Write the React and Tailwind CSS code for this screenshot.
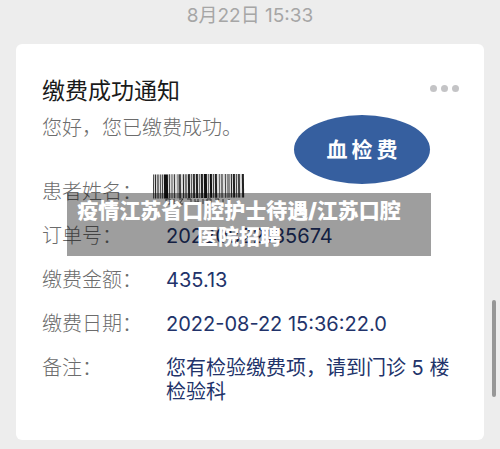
const rows = [
  { label: "患者姓名：", value: "" },
  { label: "订单号：", value: "20220822135674" },
  { label: "缴费金额：", value: "435.13" },
  { label: "缴费日期：", value: "2022-08-22 15:36:22.0" },
  { label: "备注：", value: "您有检验缴费项，请到门诊 5 楼检验科" },
];

// [x, width, colour] of every bar in the barcode
const bars = [
  [0, 1, "#444"], [2, 1, "#222"], [4, 2, "#777"], [7, 1, "#555"],
  [9, 1, "#444"], [11, 4, "#111"], [16, 1, "#444"], [18, 2, "#999"],
  [21, 1, "#333"], [24, 2, "#999"], [26, 2, "#444"], [30, 1, "#222"],
  [32, 2, "#777"], [35, 2, "#222"], [38, 1, "#555"], [40, 2, "#333"],
  [43, 2, "#222"], [46, 1, "#666"], [48, 2, "#222"], [51, 3, "#111"],
  [55, 1, "#666"], [57, 2, "#111"], [60, 1, "#444"], [62, 2, "#222"],
  [66, 1, "#666"], [68, 2, "#777"], [72, 1, "#444"], [74, 3, "#888"],
  [78, 1, "#222"], [80, 2, "#222"], [83, 1, "#444"], [85, 2, "#444"],
  [89, 2, "#222"],
];

function Barcode() {
  return (
    <svg
      viewBox="0 0 92 32"
      className="absolute left-[137px] top-[130px] w-[92px] h-8"
      aria-hidden="true"
    >
      <g transform="rotate(-0.7 46 12)">
        <rect width="91" height="24" fill="#ddd" />
        {bars.map(([x, w, fill]) => (
          <rect key={x} x={x} y="0" width={w} height="24" fill={fill} />
        ))}
      </g>
      <g stroke="#555" fill="none">
        <path d="M13 25h4v5h-4zM21 25v5M26 25h4l-4 5h4M34 25h4v5h-4M42 25v3h4M45 25v5M50 30v-5M54 25h4v5h-4zM62 25h4l-2 5M70 25v5M76 25v5" />
      </g>
    </svg>
  );
}

function App() {
  return (
    <div className="relative min-h-screen bg-[#ededed] px-4 pb-2 font-['Inter','Noto_Sans_CJK_SC',sans-serif]">
      <p className="h-11 pt-1 text-center text-[19px] leading-6 text-[#a6a6a6]">
        8月22日 15:33
      </p>

      <div className="relative rounded-md bg-white px-[26px] pt-8 pb-9">
        <div className="flex items-center justify-between">
          <h1 className="text-[23px] leading-[30px] text-[#1a1a1a]">缴费成功通知</h1>
          <button
            type="button"
            aria-label="更多"
            className="-mr-px flex items-center gap-1 pb-1.5"
          >
            <span className="size-[7px] rounded-full bg-[#c4c4c6]" />
            <span className="size-[7px] rounded-full bg-[#c4c4c6]" />
            <span className="size-[7px] rounded-full bg-[#c4c4c6]" />
          </button>
        </div>
        <p className="mt-[10px] text-[20px] leading-6 font-light text-[#6c6c6c]">您好，您已缴费成功。</p>

        <dl className="mt-10 space-y-5 text-[20px] leading-6">
          {rows.map((row) => (
            <div key={row.label} className="flex">
              <dt className="w-[124px] shrink-0 font-light text-[#6c6c6c]">{row.label}</dt>
              <dd className="flex-1 text-[#22336a]">{row.value}</dd>
            </div>
          ))}
        </dl>

        <Barcode />

        {/* Fee badge */}
        <div className="absolute right-[54px] top-[71px] flex h-[69px] w-[136px] items-center justify-center gap-1 rounded-[50%] bg-[#365f9f] text-[21px] font-bold text-white">
          <span>血</span>
          <span>检</span>
          <span>费</span>
        </div>
      </div>

      {/* Caption */}
      <div className="absolute left-[67px] right-[69px] top-[193px] bg-black/38 pt-[5px] pb-[6px] pl-1 pr-6 text-center text-[21px] leading-[26px] font-black text-white font-['Inter','Noto_Sans_CJK_SC',sans-serif]">
        疫情江苏省口腔护士待遇/江苏口腔医院招聘
      </div>

      {/* Scroll thumb */}
      <div className="absolute right-1 top-[300px] h-[97px] w-1 rounded-full bg-[#979797]" />
    </div>
  );
}

export default App;
